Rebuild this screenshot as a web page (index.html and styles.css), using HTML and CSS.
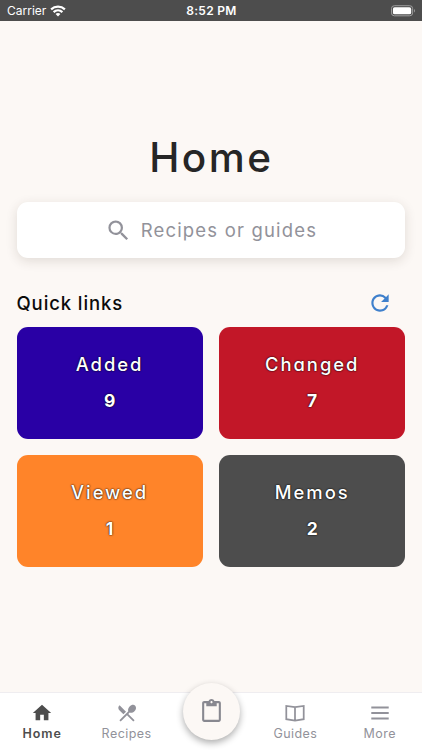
FILE: index.html
```html
<!DOCTYPE html>
<html lang="en">
<head>
<meta charset="utf-8">
<title>Home</title>
<link rel="stylesheet" href="styles.css">
</head>
<body>
<div class="app">
  <header class="status">
    <div class="carrier"><span>Carrier</span>
      <svg width="16" height="12" viewBox="0 0 16 12" fill="none" stroke="#fff" stroke-width="2.200"><path d="M1.100 4.400C5 .8 11 .8 14.900 4.400M3.600 7.100c2.500-2.300 6.300-2.300 8.800 0"/><path d="M8 11.400 5.600 9c1.300-1.200 3.500-1.200 4.800 0z" fill="#fff" stroke="none"/></svg>
    </div>
    <span class="time">8:52 PM</span>
    <svg class="battery" width="25" height="12" viewBox="0 0 26 12"><rect x=".5" y=".5" width="22" height="10.500" rx="3" fill="none" stroke="#a0a0a0"/><rect x="2" y="2" width="19" height="7.500" rx="1.800" fill="#fff"/><path d="M24 4v3.600c1.300-.5 1.300-3.100 0-3.600" fill="#a0a0a0"/></svg>
  </header>
  <main>
    <h1>Home</h1>
    <div class="search">
      <svg width="27" height="27" viewBox="0 0 24 24"><path d="M15.500 14h-.79l-.28-.27A6.471 6.471 0 0 0 16 9.500 6.500 6.500 0 1 0 9.500 16c1.610 0 3.090-.59 4.230-1.570l.27.28v.79l5 4.990L20.490 19l-4.990-5zm-6 0C7.010 14 5 11.990 5 9.500S7.010 5 9.500 5 14 7.010 14 9.500 11.990 14 9.500 14z"/></svg>
      <span>Recipes or guides</span>
    </div>
    <div class="heading">
      <h2>Quick links</h2>
      <svg width="26" height="26" viewBox="0 0 24 24"><path d="M17.650 6.350A7.958 7.958 0 0 0 12 4c-4.420 0-7.990 3.580-7.990 8s3.570 8 7.990 8c3.730 0 6.840-2.550 7.730-6h-2.080A5.990 5.990 0 0 1 12 18c-3.310 0-6-2.690-6-6s2.690-6 6-6c1.660 0 3.140.69 4.220 1.780L13 11h7V4l-2.350 2.350z"/></svg>
    </div>
    <div class="grid">
      <div class="card added"><span>Added</span><b>9</b></div>
      <div class="card changed"><span>Changed</span><b>7</b></div>
      <div class="card viewed"><span>Viewed</span><b>1</b></div>
      <div class="card memos"><span>Memos</span><b>2</b></div>
    </div>
  </main>
  <nav>
    <div class="tab active"><svg viewBox="0 0 24 24"><path d="M10 20v-6h4v6h5v-8h3L12 3 2 12h3v8z"/></svg><span>Home</span></div>
    <div class="tab recipes"><svg viewBox="0 0 24 24"><path d="M8.100 13.340l2.830-2.830L3.910 3.500a4.008 4.008 0 0 0 0 5.660l4.190 4.180zm6.780-1.810c1.530.71 3.680.21 5.270-1.380 1.910-1.910 2.280-4.650.81-6.120-1.460-1.460-4.200-1.100-6.120.81-1.590 1.590-2.090 3.740-1.380 5.270L3.700 19.870l1.410 1.410L12 14.410l6.880 6.880 1.410-1.410L13.410 13l1.470-1.470z"/></svg><span>Recipes</span></div>
    <div class="fab"><svg width="25" height="25" viewBox="0 0 24 24"><path d="M19 2h-4.180C14.400.84 13.300 0 12 0S9.600.84 9.180 2H5c-1.100 0-2 .9-2 2v16c0 1.100.9 2 2 2h14c1.100 0 2-.9 2-2V4c0-1.100-.9-2-2-2zm-7 0c.55 0 1 .45 1 1s-.45 1-1 1-1-.45-1-1 .45-1 1-1zm7 18H5V4h2v3h10V4h2v16z"/></svg></div>
    <div class="tab guides"><svg class="line" viewBox="0 0 24 24"><path d="M12 5.500 2.500 4.300v14.500L12 20.200l9.500-1.400V4.300zM12 5.500v14.500"/></svg><span>Guides</span></div>
    <div class="tab more"><svg viewBox="0 0 24 24"><path d="M2.500 5h19v2h-19zm0 6h19v2h-19zm0 6h19v2h-19z"/></svg><span>More</span></div>
  </nav>
</div>
</body>
</html>
```
FILE: styles.css
```css
* { box-sizing: border-box; }
body { margin: 0; font-family: Inter, sans-serif; font-feature-settings: "cv11"; }
svg { display: block; flex: none; }
.app { width: 422px; height: 750px; display: flex; flex-direction: column; background: #fcf8f5; overflow: hidden; }
.status { height: 21px; background: #4d4d4d; color: #fff; display: grid; grid-template-columns: 1fr auto 1fr; align-items: center; padding: 0 6px 0 7px; font-size: 12px; line-height: 21px; font-feature-settings: normal; }
.carrier { display: flex; align-items: center; gap: 4px; }
.time { font-weight: 600; font-size: 12px; letter-spacing: .3px; }
.battery { justify-self: end; }
main { flex: 1; padding: 0 16.700px 0 16.500px; }
h1 { margin: 113px 0 0; height: 48px; line-height: 48px; font-size: 40.500px; font-weight: 550; text-align: center; color: #262626; letter-spacing: 2.500px; text-indent: 1px; }
.search { margin-top: 20px; height: 56px; border-radius: 11px; background: #fff; box-shadow: 0 3px 12px rgba(60,40,30,.14); display: flex; align-items: center; justify-content: center; gap: 9px; color: #92929a; font-size: 18.500px; letter-spacing: 1.180px; }
.search svg { fill: #92929a; }
.heading { height: 69px; padding: 20px 12px 0 0; display: flex; align-items: center; justify-content: space-between; }
h2 { margin: 0; font-size: 18.500px; font-weight: 550; letter-spacing: .9px; color: #0b0b0b; }
.heading svg { fill: #3f80cc; }
.grid { display: grid; grid-template-columns: 1fr 1fr; grid-auto-rows: 112px; gap: 16.400px; }
.card { border-radius: 11px; color: #fff; display: flex; flex-direction: column; align-items: center; padding-top: 23px; gap: 9px; font-size: 18.400px; line-height: 28px; font-weight: 550; letter-spacing: 2px; text-shadow: 0 0 2px #000, 0 0 1px rgba(0,0,0,.5); }
.card b { font-size: 17.500px; font-weight: 650; letter-spacing: 0; }
.added { background: #2900a5; }
.changed { background: #c21728; }
.viewed { background: #ff8429; }
.memos { background: #4d4d4d; }
nav { height: 58px; flex: none; background: #fff; border-top: 1px solid #efedf0; display: grid; grid-template-columns: repeat(5, 1fr); }
.tab { display: flex; flex-direction: column; align-items: center; padding-top: 9px; color: #92929a; font-size: 12.500px; line-height: 16px; letter-spacing: .45px; }
.tab svg { width: 22px; height: 22px; fill: currentColor; margin-bottom: 2px; }
.tab .line { fill: none; stroke: currentColor; stroke-width: 1.900; }
.active { color: #4d4d4d; font-weight: 600; letter-spacing: .9px; }
.fab { width: 57px; height: 57px; margin-top: -10.500px; margin-left: 1px; justify-self: center; border-radius: 50%; background: #fcf8f5; box-shadow: 0 3px 7px rgba(0,0,0,.32); display: flex; align-items: center; justify-content: center; }
.fab svg { fill: #888890; }
```
